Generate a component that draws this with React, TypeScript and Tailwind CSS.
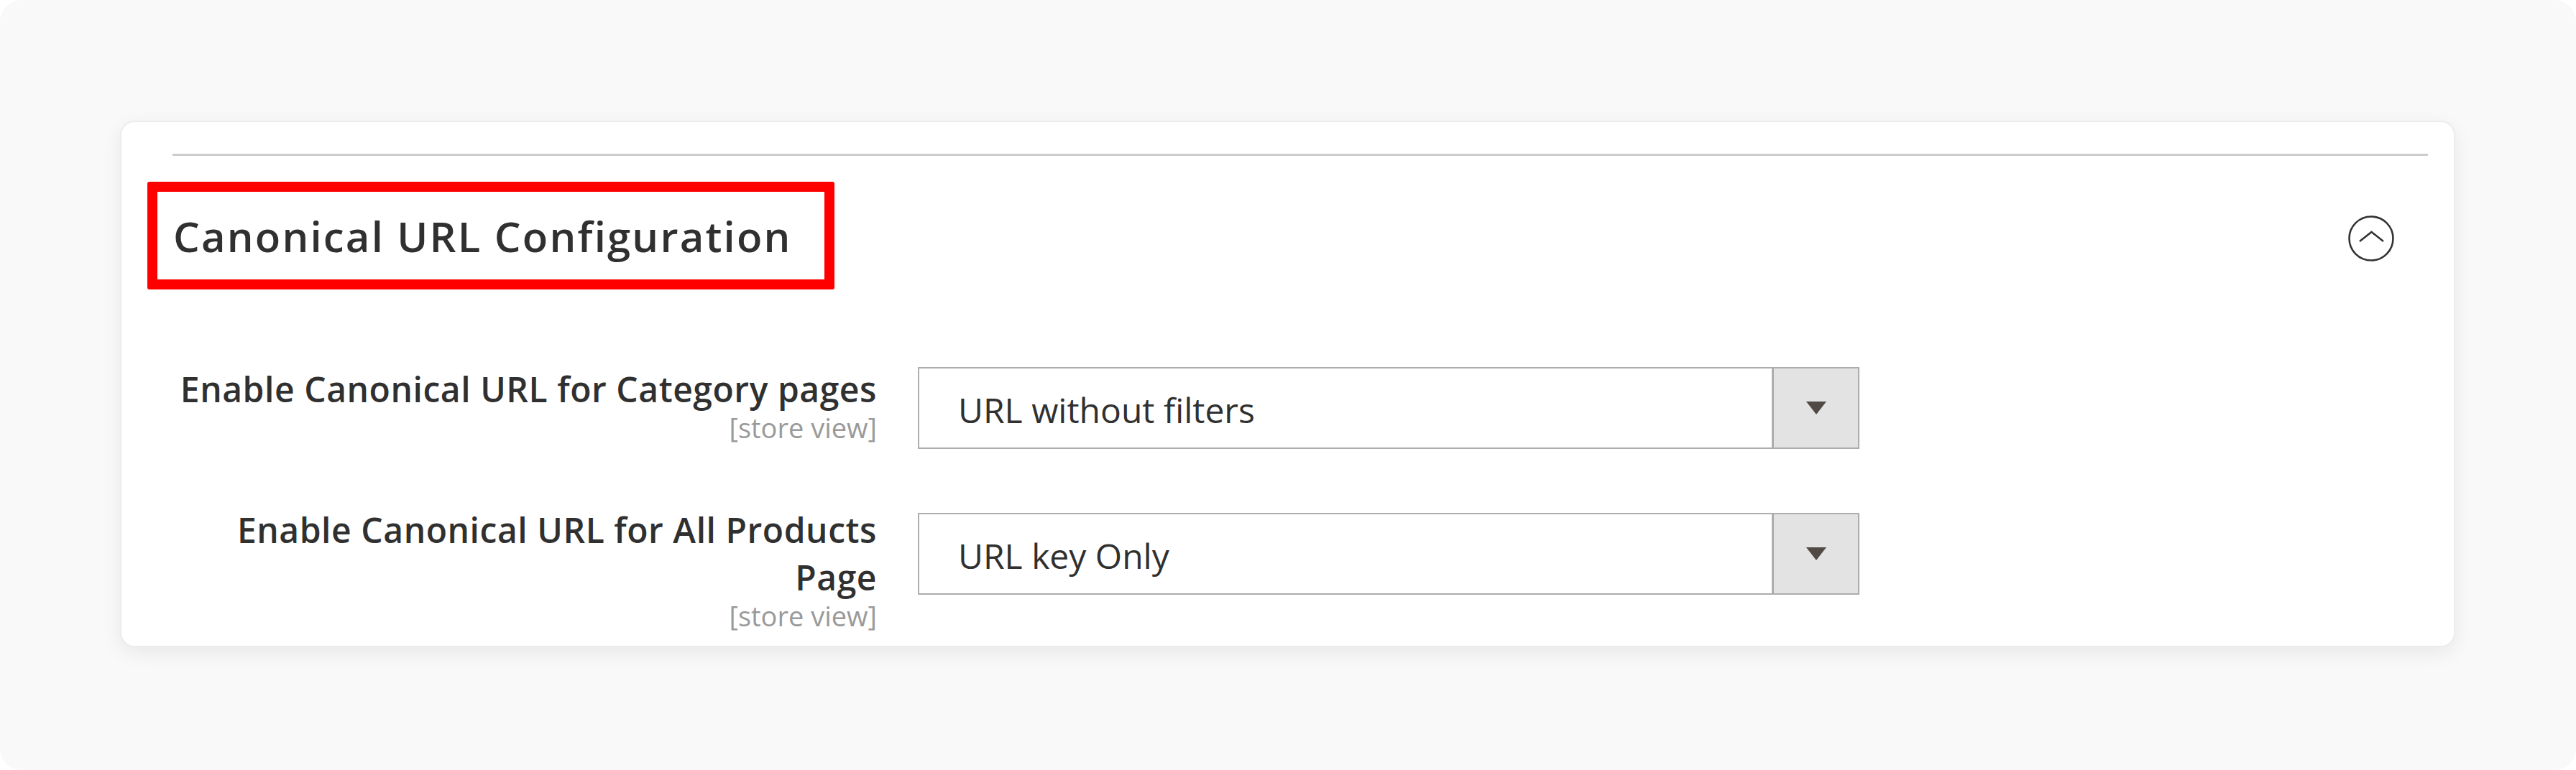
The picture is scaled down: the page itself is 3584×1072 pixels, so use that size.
import React from "react";

const font = { fontFamily: '"Open Sans", "Noto Sans", sans-serif' };

function Arrow() {
  return (
    <svg width="28" height="18" viewBox="0 0 28 18" className="block">
      <polygon points="0,0 28,0 14,18" fill="#514943" />
    </svg>
  );
}

function Select({ value, className }: { value: string; className?: string }) {
  return (
    <div
      className={
        "flex h-[114px] w-[1310px] border-2 border-[#adadad] bg-white " +
        (className ?? "")
      }
    >
      <div className="flex flex-1 items-center pl-[54px] pt-[6px] text-[48px] font-normal text-[#303030]">
        {value}
      </div>
      <div className="flex w-[120px] items-center justify-center border-l-[3px] border-[#adadad] bg-[#e3e3e3]">
        <Arrow />
      </div>
    </div>
  );
}

function Label({ lines }: { lines: string[] }) {
  return (
    <div className="flex w-[980px] flex-col items-end text-right">
      {lines.map((l) => (
        <div
          key={l}
          className="text-[48px] font-semibold leading-[66px] tracking-[0.55px] text-[#303030]"
        >
          {l}
        </div>
      ))}
      <div className="text-[38px] font-normal leading-[40px] text-[#9a9a9a]">
        [store view]
      </div>
    </div>
  );
}

export default function App() {
  return (
    <div className="h-[1072px] w-[3584px] bg-white" style={font}>
      <div className="h-[1072px] w-[3584px] rounded-[30px] bg-[#f9f9f9] pl-[167px] pt-[168px]">
        <div className="w-[3249px] rounded-[20px] border-2 border-[#ececec] bg-white pb-[22px] pl-[71px] pr-[36px] pt-[44px] shadow-[0_8px_28px_rgba(0,0,0,0.07)]">
          <div className="h-[3px] w-full bg-[#cccccc]" />
          <div className="mt-[36px] flex items-center justify-between">
            <div className="-ml-[35px] flex h-[150px] w-[956px] items-center rounded-[3px] border-[14px] border-[#ff0000] pl-[22px]">
              <div className="whitespace-nowrap text-[58px] font-semibold leading-[79px] tracking-[2.2px] text-[#303030]">
                Canonical URL Configuration
              </div>
            </div>
            <div className="mr-[47px] mt-[8px]">
              <svg width="64" height="64" viewBox="0 0 64 64" className="block">
                <circle
                  cx="32"
                  cy="32"
                  r="30.5"
                  fill="none"
                  stroke="#333333"
                  strokeWidth="2.6"
                />
                <polyline
                  points="16,36 32.5,23 49,36"
                  fill="none"
                  stroke="#333333"
                  strokeWidth="2.6"
                />
              </svg>
            </div>
          </div>
          <div className="mt-[106px] flex items-start gap-[57px]">
            <Label lines={["Enable Canonical URL for Category pages"]} />
            <Select value="URL without filters" className="mt-[2px]" />
          </div>
          <div className="mt-[80px] flex items-start gap-[57px]">
            <Label lines={["Enable Canonical URL for All Products", "Page"]} />
            <Select value="URL key Only" className="mt-[9px]" />
          </div>
        </div>
      </div>
    </div>
  );
}
